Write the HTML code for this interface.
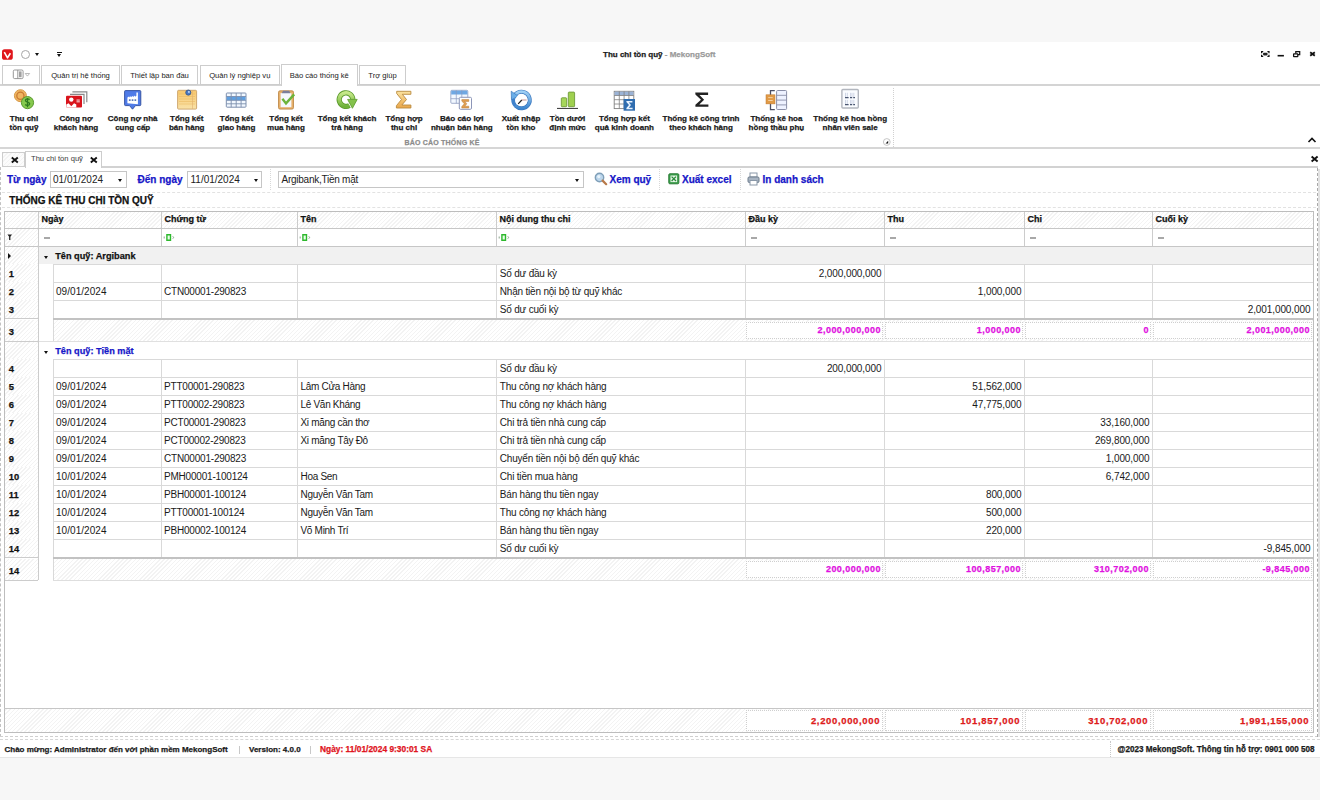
<!DOCTYPE html><html><head><meta charset="utf-8"><style>
*{box-sizing:border-box;margin:0;padding:0}
html,body{width:1320px;height:800px;overflow:hidden;background:#f7f7f7;font-family:"Liberation Sans",sans-serif;color:#1a1a1a}
.abs{position:absolute}
.t{position:absolute;white-space:nowrap;line-height:1}
.b{font-weight:bold;-webkit-text-stroke:0.25px currentColor}
.hatch{background-color:#fcfcfc;background-image:repeating-linear-gradient(-45deg,#f3f3f3 0 1px,transparent 1px 2.9px)}
</style></head><body>
<div class="abs" style="left:0;top:42px;width:1320px;height:716px;background:#fff"></div>
<svg class="abs" style="left:0;top:47px" width="16" height="15" viewBox="0 0 16 15"><rect x="2" y="2.3" width="10.8" height="10.5" rx="2.6" fill="#e0161c"/><path d="M4.3 5.2l3.2 5.6 2.9-4.6" fill="none" stroke="#fff" stroke-width="1.6" stroke-linejoin="round"/></svg>
<div class="abs" style="left:21px;top:50px;width:9px;height:9px;border:1px solid #a6a6a6;border-radius:50%"></div>
<div class="abs" style="left:35px;top:53px;width:0;height:0;border-left:2.5px solid transparent;border-right:2.5px solid transparent;border-top:3px solid #111"></div>
<div class="abs" style="left:57px;top:52px;width:5px;height:1px;background:#111"></div>
<div class="abs" style="left:57px;top:54px;width:0;height:0;border-left:2.5px solid transparent;border-right:2.5px solid transparent;border-top:3px solid #111"></div>
<div class="t b" style="left:603px;top:50.8px;font-size:8px;color:#1a1a1a">Thu chi tồn quỹ <span style="color:#9a9a9a">- MekongSoft</span></div>
<svg class="abs" style="left:1255px;top:44px" width="65" height="18" viewBox="0 0 65 18"><g fill="none" stroke="#111"><path d="M6.6 9.2v-1.6h1.6M12.4 7.6h1.6v1.6M6.6 10.8v1.6h1.6M14 10.8v1.6h-1.6" stroke-width="1.2"/><rect x="8" y="8.7" width="4.6" height="2.7" rx="1.1" fill="#222" stroke="none"/><path d="M22.6 11.7h6.3" stroke-width="1.6"/><path d="M40.8 9.4v-1.8h3.9v3h-1.7" stroke-width="1.25"/><rect x="38.6" y="9.9" width="4.2" height="2.6" rx="0.3" stroke-width="1.25"/><path d="M55.2 8.2l4.6 3.6M59.8 8.2l-4.6 3.6" stroke-width="1.8"/></g></svg>
<div class="abs" style="left:0;top:84px;width:1320px;height:2px;background:#d4d4d4"></div>
<div class="abs" style="left:2px;top:65px;width:38px;height:20px;border:1px solid #cdcdcd;background:#fff"></div>
<div class="abs" style="left:41px;top:65px;width:79px;height:20px;border:1px solid #cdcdcd;background:#fff"></div>
<div class="t" style="left:41px;width:79px;text-align:center;top:71.8px;font-size:7.6px;color:#222">Quản trị hệ thống</div>
<div class="abs" style="left:121px;top:65px;width:77px;height:20px;border:1px solid #cdcdcd;background:#fff"></div>
<div class="t" style="left:121px;width:77px;text-align:center;top:71.8px;font-size:7.6px;color:#222">Thiết lập ban đầu</div>
<div class="abs" style="left:199.5px;top:65px;width:80.5px;height:20px;border:1px solid #cdcdcd;background:#fff"></div>
<div class="t" style="left:199.5px;width:80.5px;text-align:center;top:71.8px;font-size:7.6px;color:#222">Quản lý nghiệp vụ</div>
<div class="abs" style="left:281px;top:64px;width:76.5px;height:22px;border:1px solid #cdcdcd;border-bottom:none;background:#fff"></div>
<div class="t" style="left:281px;width:76.5px;text-align:center;top:71.8px;font-size:7.6px;color:#222">Báo cáo thống kê</div>
<div class="abs" style="left:359px;top:65px;width:47px;height:20px;border:1px solid #cdcdcd;background:#fff"></div>
<div class="t" style="left:359px;width:47px;text-align:center;top:71.8px;font-size:7.6px;color:#222">Trợ giúp</div>
<svg class="abs" style="left:12px;top:69px" width="20" height="11" viewBox="0 0 20 11"><rect x="1.3" y="1" width="9.8" height="8.6" rx="1.3" fill="#fff" stroke="#8c8c8c" stroke-width="0.9"/><path d="M5.8 1v8.6" stroke="#8c8c8c" stroke-width="0.9"/><rect x="7" y="2.4" width="2.6" height="5.8" fill="#a0a0a0"/><path d="M13.2 4.5h4.4l-2.2 2.6z" fill="none" stroke="#a8a8a8" stroke-width="0.8"/></svg>
<div class="abs" style="left:0;top:146.5px;width:1320px;height:2px;background:#d6d6d6"></div>
<div class="t b" style="left:-36px;width:120px;text-align:center;top:114.5px;font-size:8px;color:#1a1a1a">Thu chi</div>
<div class="t b" style="left:-36px;width:120px;text-align:center;top:123.5px;font-size:8px;color:#1a1a1a">tồn quỹ</div>
<div class="t b" style="left:16px;width:120px;text-align:center;top:114.5px;font-size:8px;color:#1a1a1a">Công nợ</div>
<div class="t b" style="left:16px;width:120px;text-align:center;top:123.5px;font-size:8px;color:#1a1a1a">khách hàng</div>
<div class="t b" style="left:72.69999999999999px;width:120px;text-align:center;top:114.5px;font-size:8px;color:#1a1a1a">Công nợ nhà</div>
<div class="t b" style="left:72.69999999999999px;width:120px;text-align:center;top:123.5px;font-size:8px;color:#1a1a1a">cung cấp</div>
<div class="t b" style="left:126.69999999999999px;width:120px;text-align:center;top:114.5px;font-size:8px;color:#1a1a1a">Tổng kết</div>
<div class="t b" style="left:126.69999999999999px;width:120px;text-align:center;top:123.5px;font-size:8px;color:#1a1a1a">bán hàng</div>
<div class="t b" style="left:176.5px;width:120px;text-align:center;top:114.5px;font-size:8px;color:#1a1a1a">Tổng kết</div>
<div class="t b" style="left:176.5px;width:120px;text-align:center;top:123.5px;font-size:8px;color:#1a1a1a">giao hàng</div>
<div class="t b" style="left:226px;width:120px;text-align:center;top:114.5px;font-size:8px;color:#1a1a1a">Tổng kết</div>
<div class="t b" style="left:226px;width:120px;text-align:center;top:123.5px;font-size:8px;color:#1a1a1a">mua hàng</div>
<div class="t b" style="left:287px;width:120px;text-align:center;top:114.5px;font-size:8px;color:#1a1a1a">Tổng kết khách</div>
<div class="t b" style="left:287px;width:120px;text-align:center;top:123.5px;font-size:8px;color:#1a1a1a">trả hàng</div>
<div class="t b" style="left:344px;width:120px;text-align:center;top:114.5px;font-size:8px;color:#1a1a1a">Tổng hợp</div>
<div class="t b" style="left:344px;width:120px;text-align:center;top:123.5px;font-size:8px;color:#1a1a1a">thu chi</div>
<div class="t b" style="left:401.8px;width:120px;text-align:center;top:114.5px;font-size:8px;color:#1a1a1a">Báo cáo lợi</div>
<div class="t b" style="left:401.8px;width:120px;text-align:center;top:123.5px;font-size:8px;color:#1a1a1a">nhuận bán hàng</div>
<div class="t b" style="left:461px;width:120px;text-align:center;top:114.5px;font-size:8px;color:#1a1a1a">Xuất nhập</div>
<div class="t b" style="left:461px;width:120px;text-align:center;top:123.5px;font-size:8px;color:#1a1a1a">tồn kho</div>
<div class="t b" style="left:507.6px;width:120px;text-align:center;top:114.5px;font-size:8px;color:#1a1a1a">Tồn dưới</div>
<div class="t b" style="left:507.6px;width:120px;text-align:center;top:123.5px;font-size:8px;color:#1a1a1a">định mức</div>
<div class="t b" style="left:564.4px;width:120px;text-align:center;top:114.5px;font-size:8px;color:#1a1a1a">Tổng hợp kết</div>
<div class="t b" style="left:564.4px;width:120px;text-align:center;top:123.5px;font-size:8px;color:#1a1a1a">quả kinh doanh</div>
<div class="t b" style="left:641px;width:120px;text-align:center;top:114.5px;font-size:8px;color:#1a1a1a">Thống kê công trình</div>
<div class="t b" style="left:641px;width:120px;text-align:center;top:123.5px;font-size:8px;color:#1a1a1a">theo khách hàng</div>
<div class="t b" style="left:716.4px;width:120px;text-align:center;top:114.5px;font-size:8px;color:#1a1a1a">Thống kê hoa</div>
<div class="t b" style="left:716.4px;width:120px;text-align:center;top:123.5px;font-size:8px;color:#1a1a1a">hồng thầu phụ</div>
<div class="t b" style="left:790.2px;width:120px;text-align:center;top:114.5px;font-size:8px;color:#1a1a1a">Thống kê hoa hồng</div>
<div class="t b" style="left:790.2px;width:120px;text-align:center;top:123.5px;font-size:8px;color:#1a1a1a">nhân viên sale</div>
<div class="t b" style="left:404.5px;top:138.5px;font-size:7px;color:#8c8c8c;letter-spacing:0.2px">BÁO CÁO THỐNG KÊ</div>
<svg class="abs" style="left:882px;top:137px" width="10" height="10"><circle cx="4.8" cy="5" r="3.4" fill="#fff" stroke="#b8b8b8" stroke-width="0.8"/><path d="M6.2 3.8v2.6h-2.6z" fill="#111"/></svg>
<div class="abs" style="left:893px;top:88px;width:0;height:59px;border-left:1px dotted #d0d0d0"></div>
<svg class="abs" style="left:1306px;top:136px" width="12" height="8"><path d="M2.5 6l3.5-3.5 3.5 3.5" fill="none" stroke="#111" stroke-width="1.6"/></svg>
<svg class="abs" style="left:0;top:0" width="900" height="115" viewBox="0 0 900 115"><defs><linearGradient id="gGreen" x1="0" y1="0" x2="0" y2="1"><stop offset="0" stop-color="#c7e98a"/><stop offset="1" stop-color="#6fb23a"/></linearGradient><linearGradient id="gOrange" x1="0" y1="0" x2="0" y2="1"><stop offset="0" stop-color="#fbe3a0"/><stop offset="1" stop-color="#e9a64a"/></linearGradient><linearGradient id="gBlue" x1="0" y1="0" x2="0" y2="1"><stop offset="0" stop-color="#9fd0f5"/><stop offset="1" stop-color="#3d86cf"/></linearGradient><linearGradient id="gPad" x1="0" y1="0" x2="0" y2="1"><stop offset="0" stop-color="#f7c76c"/><stop offset="1" stop-color="#f9e2a8"/></linearGradient></defs><circle cx="20.4" cy="95.7" r="6" fill="#f0b560" stroke="#d69a4a" stroke-width="1"/><circle cx="20.4" cy="95.7" r="3.6" fill="none" stroke="#c97a32" stroke-width="1.3"/><circle cx="27.5" cy="102.6" r="6.1" fill="#86c94e" stroke="#5a9a2e" stroke-width="1"/><path d="M29.6 99.6c-1-1-4.2-1-4.2 0.9c0 2 4.3 1.2 4.3 3.2c0 2-3.4 2-4.5 0.8M27.5 98v9.2" fill="none" stroke="#2f7a1e" stroke-width="1.3"/><path d="M72.4 91.9h14.4v10.3" fill="none" stroke="#8a8a8a" stroke-width="1.2"/><path d="M70 94.3h14v9.8" fill="none" stroke="#8a8a8a" stroke-width="1.2"/><rect x="66" y="95.8" width="16" height="11.8" rx="1" fill="#d9141c"/><circle cx="71.3" cy="99.6" r="2.2" fill="#fff"/><path d="M66.3 107.6v-3.2l2.2-1.2 2.8 3 2.8-3 2.2 1.2v3.2z" fill="#fff"/><rect x="76.5" y="99.6" width="3.3" height="0.9" fill="#fff"/><rect x="76.5" y="101.4" width="3.3" height="0.9" fill="#fff"/><path d="M125.5 90.6h14.4a0.9 0.9 0 0 1 .9 .9v13.2a0.9 0.9 0 0 1 -.9 .9h-4.4l-3 3.6-3-3.6h-4a0.9 0.9 0 0 1 -.9 -.9v-13.2a0.9 0.9 0 0 1 .9 -.9z" fill="#4f7be8" stroke="#2e4c9a" stroke-width="0.9"/><path d="M127.4 103.2v-5.6l1.9-1.4v1.2l1.9-1.4v1.2l1.9-1.4v1.2l1.9-1.4v1.2l1.4-1v-3.4h1.5v11.8z" fill="#fff"/><path d="M128.9 99.3h1.7v1.7h-1.7zM131.7 99.3h1.7v1.7h-1.7zM134.5 99.3h1.7v1.7h-1.7z" fill="#5a78b8"/><rect x="177.6" y="90.3" width="19" height="18.8" rx="1" fill="url(#gPad)" stroke="#c9a067" stroke-width="0.9"/><path d="M179 94h16M179 96.5h16M179 99h16M179 101.5h16M179 104h16" stroke="#e9b55a" stroke-width="0.5"/><path d="M192.5 91v18" stroke="#e0b070" stroke-width="0.6"/><circle cx="188.3" cy="92.6" r="2.6" fill="#4a78c0" stroke="#2d4f86" stroke-width="0.7"/><circle cx="188.9" cy="91.9" r="0.9" fill="#cfe3ff"/><rect x="226.3" y="93" width="19.7" height="14.2" rx="0.8" fill="#f2f8ff" stroke="#7d8fae" stroke-width="1"/><rect x="226.8" y="96.5" width="18.7" height="3.8" fill="#5f9fe0"/><path d="M231.2 93v14.2M236.2 93v14.2M241.1 93v14.2M226.3 96.5h19.7M226.3 100.3h19.7M226.3 103.8h19.7" stroke="#7d8fae" stroke-width="0.9"/><rect x="278.5" y="90.8" width="15" height="18.3" rx="1.5" fill="#e6b06a" stroke="#b9823e" stroke-width="0.8"/><rect x="280.6" y="93" width="10.8" height="14.2" fill="#f5f8fc"/><path d="M281.6 93.3l1.5-2.6h6l1.5 2.6z" fill="#7b7f9a"/><path d="M282.4 98.8l3.6 4.6 8.2-9" fill="none" stroke="#6cb43a" stroke-width="2.4"/><path d="M349.4 105.5A6.8 6.8 0 1 1 352.8 99.6" fill="none" stroke="#5a9a2a" stroke-width="5.2"/><path d="M349.4 105.5A6.8 6.8 0 1 1 352.8 99.6" fill="none" stroke="url(#gGreen)" stroke-width="3.6"/><path d="M347.6 99.4h9.6l-4.8 8.9z" fill="#84c24c" stroke="#5a9a2a" stroke-width="0.8" stroke-linejoin="round"/><path d="M396.7 91.3h14.2v3h-8.6l4.2 5.2-4.6 5.5h9v3h-14.5v-2.3l5.1-6.2-4.8-6z" fill="url(#gOrange)" stroke="#b98a3e" stroke-width="0.9"/><rect x="450.8" y="90.3" width="17" height="13" rx="1" fill="#f2f8ff" stroke="#8a9abf" stroke-width="0.8"/><rect x="451.2" y="90.7" width="16.2" height="3.8" fill="#6fa8e3"/><path d="M456.3 90.3v13M461.8 90.3v13M450.8 98.7h17" stroke="#8a9abf" stroke-width="0.7"/><rect x="459.3" y="97.3" width="12.2" height="12" rx="1.2" fill="#fff" stroke="#8d96b8" stroke-width="1"/><path d="M461.8 99.6h7v1.8h-4l2 2.4-2 2.4h4v1.8h-7v-1.4l2.5-2.8-2.5-2.8z" fill="#e2a052" stroke="#b47a3a" stroke-width="0.5"/><path d="M513.3 98.5A8.3 8.3 0 1 1 515.6 105.9" fill="none" stroke="#3b78bf" stroke-width="4.0"/><path d="M513.3 98.5A8.3 8.3 0 1 1 515.6 105.9" fill="none" stroke="url(#gBlue)" stroke-width="2.6"/><path d="M515.6 105.9A8.3 8.3 0 0 1 513.3 98.5" fill="none" stroke="#3f82cc" stroke-width="3.6"/><path d="M511.2 91.2l0.3 8.6 6.8-3.6z" fill="#6aaee8" stroke="#3b78bf" stroke-width="0.7" stroke-linejoin="round"/><circle cx="521.5" cy="100.2" r="5.9" fill="#fff"/><path d="M521.8 100l-3.6 3.8" stroke="#222" stroke-width="1.2"/><path d="M521.8 100h4.8" stroke="#a04848" stroke-width="0.6"/><rect x="561.3" y="97.8" width="5.4" height="8.9" rx="0.8" fill="#a6d65a" stroke="#6f9a3a" stroke-width="0.9"/><rect x="568.3" y="92.1" width="6.3" height="14.6" rx="0.8" fill="#9fd04f" stroke="#6f9a3a" stroke-width="0.9"/><rect x="557" y="107.9" width="21" height="1.1" fill="#444"/><rect x="614.2" y="91.3" width="19.6" height="17.3" fill="#fff" stroke="#808080" stroke-width="0.9"/><rect x="614.6" y="91.7" width="18.8" height="3.8" fill="#9bb3d6"/><path d="M619.3 91.3v17.3M624.1 91.3v17.3M628.9 91.3v17.3M614.2 95.5h19.6M614.2 99.7h19.6M614.2 104h19.6" stroke="#808080" stroke-width="0.8"/><rect x="623.6" y="99" width="11.4" height="11.7" fill="#2f6db0"/><path d="M626.4 100.9h6v1.5h-3.6l2.2 2.7-2.2 2.7h3.8v1.5h-6.2v-1.2l2.6-3-2.6-3z" fill="#e8f3ff"/><path d="M695.3 92.6h12.8v2.4h-8.6l4.6 4.7-4.8 4.8h9.1v2.2h-13v-1.9l5.6-5.1-5.6-5.2z" fill="#222"/><path d="M774.8 90.6h-4.3v19h4.3" fill="none" stroke="#4c4f64" stroke-width="1.3"/><rect x="766" y="94.8" width="9" height="9.1" fill="#e09a46" stroke="#c07a30" stroke-width="0.5"/><path d="M768.2 97.6h4.5M768.2 100.5h4.5" stroke="#fbe0b8" stroke-width="0.8"/><rect x="776.6" y="90.5" width="10" height="19" rx="1" fill="#eef2ff" stroke="#8a8fa8" stroke-width="1"/><path d="M776.6 95.3h10M776.6 100.1h10M776.6 104.9h10" stroke="#8a8fa8" stroke-width="0.9"/><rect x="841.9" y="89.5" width="16.4" height="18.5" rx="1" fill="#fafcff" stroke="#b2b6be" stroke-width="1.4"/><path d="M845.5 92.8v4.4M847.3 92.8v4.4M850.6 92.8v4.4M852 92.8v4.4M853.8 92.8v4.4M845.5 99.8v4.4M847.3 99.8v4.4M850.6 99.8v4.4M852 99.8v4.4M853.8 99.8v4.4" stroke="#c5cde0" stroke-width="0.8"/><path d="M845 97.6h3.6M850 97.6h2.2M853.2 97.6h1.8M845 104.6h3.6M850 104.6h2.2M853.2 104.6h1.8" stroke="#4a5670" stroke-width="1.1"/></svg>
<div class="abs hatch" style="left:2px;top:152px;width:22.5px;height:15px;border:1px solid #cdcdcd"></div>
<svg class="abs" style="left:9.5px;top:155.5px" width="10" height="8"><path d="M1.8 1.6l6 4.8M7.8 1.6l-6 4.8" stroke="#111" stroke-width="1.9"/></svg>
<div class="abs" style="left:24.5px;top:151px;width:77.5px;height:17px;border:1px solid #cdcdcd;border-bottom:none;background:#fff"></div>
<div class="t" style="left:31px;top:154.5px;font-size:7.6px;color:#3a3a3a">Thu chi tồn quỹ</div>
<svg class="abs" style="left:89px;top:155.5px" width="10" height="8"><path d="M1.8 1.6l6 4.8M7.8 1.6l-6 4.8" stroke="#111" stroke-width="1.9"/></svg>
<svg class="abs" style="left:1309.5px;top:154.5px" width="10" height="9"><path d="M1.6 1.6l6 5M7.6 1.6l-6 5" stroke="#111" stroke-width="1.9"/></svg>
<div class="abs" style="left:102px;top:166px;width:1216px;height:2px;background:#d2d2d2"></div>
<div class="abs" style="left:0;top:167px;width:0;height:570px;border-left:1px dashed #c2c2c2"></div>
<div class="abs" style="left:1318px;top:169px;width:2px;height:568px;background:#e2e2e2"></div>
<div class="t b" style="left:7px;top:174.5px;font-size:10px;color:#1717c8">Từ ngày</div>
<div class="abs" style="left:49.5px;top:171px;width:77.0px;height:17px;border:1px solid #c6c6c6;background:#fff;"></div>
<div class="t" style="left:53px;top:175px;font-size:10px;color:#222">01/01/2024</div>
<div class="abs" style="left:118px;top:178.5px;width:0;height:0;border-left:2.5px solid transparent;border-right:2.5px solid transparent;border-top:3px solid #111"></div>
<div class="t b" style="left:137.5px;top:174.5px;font-size:10px;color:#1717c8">Đến ngày</div>
<div class="abs" style="left:186.5px;top:171px;width:75.0px;height:17px;border:1px solid #c6c6c6;background:#fff;"></div>
<div class="t" style="left:190.5px;top:175px;font-size:10px;color:#222">11/01/2024</div>
<div class="abs" style="left:253.5px;top:178.5px;width:0;height:0;border-left:2.5px solid transparent;border-right:2.5px solid transparent;border-top:3px solid #111"></div>
<div class="abs" style="left:269.5px;top:169px;width:0;height:21px;border-left:1px dotted #d8d8d8"></div>
<div class="abs" style="left:278px;top:171px;width:305.5px;height:17px;border:1px solid #c6c6c6;background:#fff;"></div>
<div class="t" style="left:281.5px;top:175px;font-size:10px;color:#222;letter-spacing:-0.25px">Argibank,Tiền mặt</div>
<div class="abs" style="left:575px;top:178.5px;width:0;height:0;border-left:2.5px solid transparent;border-right:2.5px solid transparent;border-top:3px solid #111"></div>
<svg class="abs" style="left:594px;top:172px" width="14" height="14" viewBox="0 0 14 14"><circle cx="5.5" cy="5.5" r="4.2" fill="#bcd6ec" stroke="#7f9fb8" stroke-width="1.4"/><circle cx="4.8" cy="4.6" r="1.6" fill="#e8f3fb"/><path d="M8.6 8.6l3.6 3.6" stroke="#b87a4a" stroke-width="2.2" stroke-linecap="round"/></svg>
<div class="t b" style="left:609.5px;top:174.5px;font-size:10px;color:#1717c8">Xem quỹ</div>
<div class="abs" style="left:659px;top:169px;width:0;height:21px;border-left:1px dotted #d8d8d8"></div>
<svg class="abs" style="left:668px;top:173px" width="12" height="12" viewBox="0 0 12 12"><rect x="0.8" y="0.8" width="10" height="10" rx="1" fill="#3aa04a" stroke="#2a7a36"/><rect x="2.5" y="2.5" width="6.6" height="6.6" fill="#e8f5e8"/><path d="M3.6 3.6l4.4 4.4M8 3.6l-4.4 4.4" stroke="#2a8a3a" stroke-width="1.3"/></svg>
<div class="t b" style="left:682px;top:174.5px;font-size:10px;color:#1717c8">Xuất excel</div>
<div class="abs" style="left:739.5px;top:169px;width:0;height:21px;border-left:1px dotted #d8d8d8"></div>
<svg class="abs" style="left:747px;top:172px" width="13" height="14" viewBox="0 0 13 14"><rect x="3" y="1" width="7" height="4" fill="#fff" stroke="#8a98a8"/><rect x="1" y="5" width="11" height="5.5" rx="1.2" fill="#a8b4c2" stroke="#6d7c8c"/><rect x="3" y="8.5" width="7" height="4.5" fill="#fff" stroke="#8a98a8"/></svg>
<div class="t b" style="left:762.5px;top:174.5px;font-size:10px;color:#1717c8">In danh sách</div>
<div class="abs" style="left:2px;top:192px;width:1314px;height:0;border-top:1px dashed #e2e2e2"></div>
<div class="t b" style="left:9.3px;top:195.5px;font-size:10px;color:#111">THỐNG KÊ THU CHI TỒN QUỸ</div>
<div class="abs" style="left:2px;top:207px;width:1314px;height:0;border-top:1px dashed #e2e2e2"></div>
<div class="abs" style="left:4px;top:211px;width:1310px;height:18px;background:#fff"></div>
<div class="abs" style="left:5px;top:212px;width:1308px;height:16px;background-color:#fff;background-image:repeating-linear-gradient(-45deg,#f3f3f3 0 1px,transparent 1px 2.9px)"></div>
<div class="t b" style="left:41.5px;top:215.08px;font-size:9px;color:#111;">Ngày</div>
<div class="t b" style="left:164.5px;top:215.08px;font-size:9px;color:#111;">Chứng từ</div>
<div class="t b" style="left:300.5px;top:215.08px;font-size:9px;color:#111;">Tên</div>
<div class="t b" style="left:499.5px;top:215.08px;font-size:9px;color:#111;">Nội dung thu chi</div>
<div class="t b" style="left:748.5px;top:215.08px;font-size:9px;color:#111;">Đầu kỳ</div>
<div class="t b" style="left:887.5px;top:215.08px;font-size:9px;color:#111;">Thu</div>
<div class="t b" style="left:1027.5px;top:215.08px;font-size:9px;color:#111;">Chi</div>
<div class="t b" style="left:1155.5px;top:215.08px;font-size:9px;color:#111;">Cuối kỳ</div>
<div class="abs" style="left:39px;top:229px;width:1274px;height:17px;background:#fff"></div>
<div class="abs" style="left:5px;top:229px;width:33px;height:17px;background-color:#fff;background-image:repeating-linear-gradient(-45deg,#f3f3f3 0 1px,transparent 1px 2.9px)"></div>
<div class="abs" style="left:4px;top:211px;width:1px;height:35px;background:#bdbdbd"></div>
<div class="abs" style="left:38px;top:211px;width:1px;height:35px;background:#cccccc"></div>
<div class="abs" style="left:161px;top:211px;width:1px;height:35px;background:#cccccc"></div>
<div class="abs" style="left:297px;top:211px;width:1px;height:35px;background:#cccccc"></div>
<div class="abs" style="left:496px;top:211px;width:1px;height:35px;background:#cccccc"></div>
<div class="abs" style="left:745px;top:211px;width:1px;height:35px;background:#cccccc"></div>
<div class="abs" style="left:884px;top:211px;width:1px;height:35px;background:#cccccc"></div>
<div class="abs" style="left:1024px;top:211px;width:1px;height:35px;background:#cccccc"></div>
<div class="abs" style="left:1152px;top:211px;width:1px;height:35px;background:#cccccc"></div>
<div class="abs" style="left:1313px;top:211px;width:1px;height:35px;background:#bdbdbd"></div>
<div class="abs" style="left:4px;top:211px;width:1310px;height:1px;background:#bdbdbd"></div>
<div class="abs" style="left:4px;top:228px;width:1310px;height:1px;background:#c6c6c6"></div>
<div class="abs" style="left:4px;top:246px;width:1310px;height:1px;background:#c6c6c6"></div>
<div class="abs" style="left:44px;top:236.5px;width:6px;height:2px;background:#a8a8a8"></div>
<svg class="abs" style="left:163px;top:232.5px" width="12" height="9" viewBox="0 0 12 9"><rect x="3.2" y="1" width="5" height="7" fill="#2db82d"/><rect x="4.6" y="2.5" width="2.2" height="4" fill="#e9ffe9"/><path d="M1.2 3.5v2M9.8 3.3l0.8 1.2-0.8 1.2" stroke="#6a8a6a" stroke-width="0.8" fill="none"/></svg>
<svg class="abs" style="left:299px;top:232.5px" width="12" height="9" viewBox="0 0 12 9"><rect x="3.2" y="1" width="5" height="7" fill="#2db82d"/><rect x="4.6" y="2.5" width="2.2" height="4" fill="#e9ffe9"/><path d="M1.2 3.5v2M9.8 3.3l0.8 1.2-0.8 1.2" stroke="#6a8a6a" stroke-width="0.8" fill="none"/></svg>
<svg class="abs" style="left:498px;top:232.5px" width="12" height="9" viewBox="0 0 12 9"><rect x="3.2" y="1" width="5" height="7" fill="#2db82d"/><rect x="4.6" y="2.5" width="2.2" height="4" fill="#e9ffe9"/><path d="M1.2 3.5v2M9.8 3.3l0.8 1.2-0.8 1.2" stroke="#6a8a6a" stroke-width="0.8" fill="none"/></svg>
<div class="abs" style="left:751px;top:236.5px;width:6px;height:2px;background:#a8a8a8"></div>
<div class="abs" style="left:890px;top:236.5px;width:6px;height:2px;background:#a8a8a8"></div>
<div class="abs" style="left:1030px;top:236.5px;width:6px;height:2px;background:#a8a8a8"></div>
<div class="abs" style="left:1158px;top:236.5px;width:6px;height:2px;background:#a8a8a8"></div>
<svg class="abs" style="left:7px;top:233px" width="6" height="8" viewBox="0 0 6 8"><path d="M0.5 1.5h4.5l-1.6 2.2v3.3h-1.3v-3.3z" fill="#222"/></svg>
<div class="abs" style="left:39px;top:247px;width:1274px;height:17px;background:#f1f1f1"></div>
<div class="abs" style="left:5px;top:247px;width:33px;height:17px;background-color:#fff;background-image:repeating-linear-gradient(-45deg,#f3f3f3 0 1px,transparent 1px 2.9px)"></div>
<div class="abs" style="left:4px;top:264px;width:34px;height:1px;background:#cccccc"></div>
<div class="abs" style="left:8px;top:252.5px;width:0;height:0;border-top:3px solid transparent;border-bottom:3px solid transparent;border-left:3px solid #111"></div>
<div class="abs" style="left:44px;top:255.5px;width:0;height:0;border-left:2.5px solid transparent;border-right:2.5px solid transparent;border-top:3px solid #111"></div>
<div class="t b" style="left:55.2px;top:252.21px;font-size:9.2px;color:#111;">Tên quỹ: Argibank</div>
<div class="abs" style="left:53px;top:264px;width:1260px;height:1px;background:#d9d9d9"></div>
<div class="abs" style="left:5px;top:264px;width:33px;height:18px;background-color:#fff;background-image:repeating-linear-gradient(-45deg,#f3f3f3 0 1px,transparent 1px 2.9px)"></div>
<div class="abs" style="left:4px;top:282px;width:34px;height:1px;background:#cccccc"></div>
<div class="t b" style="left:8.8px;top:269.34px;font-size:9.4px;color:#111;">1</div>
<div class="abs" style="left:53px;top:282px;width:1260px;height:1px;background:#d9d9d9"></div>
<div class="abs" style="left:53px;top:264px;width:1px;height:18px;background:#d9d9d9"></div>
<div class="abs" style="left:161px;top:264px;width:1px;height:18px;background:#d9d9d9"></div>
<div class="abs" style="left:297px;top:264px;width:1px;height:18px;background:#d9d9d9"></div>
<div class="abs" style="left:496px;top:264px;width:1px;height:18px;background:#d9d9d9"></div>
<div class="abs" style="left:745px;top:264px;width:1px;height:18px;background:#d9d9d9"></div>
<div class="abs" style="left:884px;top:264px;width:1px;height:18px;background:#d9d9d9"></div>
<div class="abs" style="left:1024px;top:264px;width:1px;height:18px;background:#d9d9d9"></div>
<div class="abs" style="left:1152px;top:264px;width:1px;height:18px;background:#d9d9d9"></div>
<div class="t" style="left:499.8px;top:269.2px;font-size:10px;letter-spacing:-0.2px">Số dư đầu kỳ</div>
<div class="t" style="left:581.4px;width:300px;text-align:right;top:269.2px;font-size:10px;letter-spacing:-0.1px">2,000,000,000</div>
<div class="abs" style="left:5px;top:282px;width:33px;height:18px;background-color:#fff;background-image:repeating-linear-gradient(-45deg,#f3f3f3 0 1px,transparent 1px 2.9px)"></div>
<div class="abs" style="left:4px;top:300px;width:34px;height:1px;background:#cccccc"></div>
<div class="t b" style="left:8.8px;top:287.34px;font-size:9.4px;color:#111;">2</div>
<div class="abs" style="left:53px;top:300px;width:1260px;height:1px;background:#d9d9d9"></div>
<div class="abs" style="left:53px;top:282px;width:1px;height:18px;background:#d9d9d9"></div>
<div class="abs" style="left:161px;top:282px;width:1px;height:18px;background:#d9d9d9"></div>
<div class="abs" style="left:297px;top:282px;width:1px;height:18px;background:#d9d9d9"></div>
<div class="abs" style="left:496px;top:282px;width:1px;height:18px;background:#d9d9d9"></div>
<div class="abs" style="left:745px;top:282px;width:1px;height:18px;background:#d9d9d9"></div>
<div class="abs" style="left:884px;top:282px;width:1px;height:18px;background:#d9d9d9"></div>
<div class="abs" style="left:1024px;top:282px;width:1px;height:18px;background:#d9d9d9"></div>
<div class="abs" style="left:1152px;top:282px;width:1px;height:18px;background:#d9d9d9"></div>
<div class="t" style="left:56px;top:287.2px;font-size:10px;letter-spacing:0.05px">09/01/2024</div>
<div class="t" style="left:164px;top:287.2px;font-size:10px;letter-spacing:-0.2px">CTN00001-290823</div>
<div class="t" style="left:499.8px;top:287.2px;font-size:10px;letter-spacing:-0.2px">Nhận tiền nội bộ từ quỹ khác</div>
<div class="t" style="left:721.4px;width:300px;text-align:right;top:287.2px;font-size:10px;letter-spacing:-0.1px">1,000,000</div>
<div class="abs" style="left:5px;top:300px;width:33px;height:18px;background-color:#fff;background-image:repeating-linear-gradient(-45deg,#f3f3f3 0 1px,transparent 1px 2.9px)"></div>
<div class="abs" style="left:4px;top:318px;width:34px;height:1px;background:#cccccc"></div>
<div class="t b" style="left:8.8px;top:305.34px;font-size:9.4px;color:#111;">3</div>
<div class="abs" style="left:53px;top:318px;width:1260px;height:1px;background:#d9d9d9"></div>
<div class="abs" style="left:53px;top:300px;width:1px;height:18px;background:#d9d9d9"></div>
<div class="abs" style="left:161px;top:300px;width:1px;height:18px;background:#d9d9d9"></div>
<div class="abs" style="left:297px;top:300px;width:1px;height:18px;background:#d9d9d9"></div>
<div class="abs" style="left:496px;top:300px;width:1px;height:18px;background:#d9d9d9"></div>
<div class="abs" style="left:745px;top:300px;width:1px;height:18px;background:#d9d9d9"></div>
<div class="abs" style="left:884px;top:300px;width:1px;height:18px;background:#d9d9d9"></div>
<div class="abs" style="left:1024px;top:300px;width:1px;height:18px;background:#d9d9d9"></div>
<div class="abs" style="left:1152px;top:300px;width:1px;height:18px;background:#d9d9d9"></div>
<div class="t" style="left:499.8px;top:305.2px;font-size:10px;letter-spacing:-0.2px">Số dư cuối kỳ</div>
<div class="t" style="left:1010.4px;width:300px;text-align:right;top:305.2px;font-size:10px;letter-spacing:-0.1px">2,001,000,000</div>
<div class="abs" style="left:53px;top:318px;width:1260px;height:2px;background:#c2c2c2"></div>
<div class="abs" style="left:5px;top:320px;width:33px;height:21px;background-color:#fff;background-image:repeating-linear-gradient(-45deg,#f3f3f3 0 1px,transparent 1px 2.9px)"></div>
<div class="abs" style="left:4px;top:341px;width:34px;height:1px;background:#cccccc"></div>
<div class="t b" style="left:8.8px;top:326.74px;font-size:9.4px;color:#111;">3</div>
<div class="abs" style="left:53px;top:320px;width:1260px;height:21px;background-color:#fff;background-image:repeating-linear-gradient(-45deg,#f3f3f3 0 1px,transparent 1px 2.9px)"></div>
<div class="abs" style="left:53px;top:320px;width:1px;height:21px;background:#d9d9d9"></div>
<div class="abs" style="left:53px;top:341px;width:1260px;height:1px;background:#dedede"></div>
<div class="abs" style="left:746px;top:322px;width:137px;height:17px;background:#fff;border:1px dotted #cfcfcf"></div>
<div class="t b" style="left:580.95px;width:300px;text-align:right;top:326.28px;font-size:9px;color:#e010e0;letter-spacing:0.45px">2,000,000,000</div>
<div class="abs" style="left:885px;top:322px;width:138px;height:17px;background:#fff;border:1px dotted #cfcfcf"></div>
<div class="t b" style="left:720.95px;width:300px;text-align:right;top:326.28px;font-size:9px;color:#e010e0;letter-spacing:0.45px">1,000,000</div>
<div class="abs" style="left:1025px;top:322px;width:126px;height:17px;background:#fff;border:1px dotted #cfcfcf"></div>
<div class="t b" style="left:848.95px;width:300px;text-align:right;top:326.28px;font-size:9px;color:#e010e0;letter-spacing:0.45px">0</div>
<div class="abs" style="left:1153px;top:322px;width:159px;height:17px;background:#fff;border:1px dotted #cfcfcf"></div>
<div class="t b" style="left:1009.95px;width:300px;text-align:right;top:326.28px;font-size:9px;color:#e010e0;letter-spacing:0.45px">2,001,000,000</div>
<div class="abs" style="left:39px;top:342px;width:1274px;height:17px;background:#fff"></div>
<div class="abs" style="left:5px;top:342px;width:33px;height:17px;background-color:#fff;background-image:repeating-linear-gradient(-45deg,#f3f3f3 0 1px,transparent 1px 2.9px)"></div>
<div class="abs" style="left:4px;top:359px;width:34px;height:1px;background:#cccccc"></div>
<div class="abs" style="left:44px;top:350.5px;width:0;height:0;border-left:2.5px solid transparent;border-right:2.5px solid transparent;border-top:3px solid #111"></div>
<div class="t b" style="left:55.2px;top:347.21px;font-size:9.2px;color:#1717c8;">Tên quỹ: Tiền mặt</div>
<div class="abs" style="left:39px;top:341px;width:1274px;height:1px;background:#e0e0e0"></div>
<div class="abs" style="left:53px;top:359px;width:1260px;height:1px;background:#d9d9d9"></div>
<div class="abs" style="left:5px;top:359px;width:33px;height:18px;background-color:#fff;background-image:repeating-linear-gradient(-45deg,#f3f3f3 0 1px,transparent 1px 2.9px)"></div>
<div class="abs" style="left:4px;top:377px;width:34px;height:1px;background:#cccccc"></div>
<div class="t b" style="left:8.8px;top:364.34px;font-size:9.4px;color:#111;">4</div>
<div class="abs" style="left:53px;top:377px;width:1260px;height:1px;background:#d9d9d9"></div>
<div class="abs" style="left:53px;top:359px;width:1px;height:18px;background:#d9d9d9"></div>
<div class="abs" style="left:161px;top:359px;width:1px;height:18px;background:#d9d9d9"></div>
<div class="abs" style="left:297px;top:359px;width:1px;height:18px;background:#d9d9d9"></div>
<div class="abs" style="left:496px;top:359px;width:1px;height:18px;background:#d9d9d9"></div>
<div class="abs" style="left:745px;top:359px;width:1px;height:18px;background:#d9d9d9"></div>
<div class="abs" style="left:884px;top:359px;width:1px;height:18px;background:#d9d9d9"></div>
<div class="abs" style="left:1024px;top:359px;width:1px;height:18px;background:#d9d9d9"></div>
<div class="abs" style="left:1152px;top:359px;width:1px;height:18px;background:#d9d9d9"></div>
<div class="t" style="left:499.8px;top:364.2px;font-size:10px;letter-spacing:-0.2px">Số dư đầu kỳ</div>
<div class="t" style="left:581.4px;width:300px;text-align:right;top:364.2px;font-size:10px;letter-spacing:-0.1px">200,000,000</div>
<div class="abs" style="left:5px;top:377px;width:33px;height:18px;background-color:#fff;background-image:repeating-linear-gradient(-45deg,#f3f3f3 0 1px,transparent 1px 2.9px)"></div>
<div class="abs" style="left:4px;top:395px;width:34px;height:1px;background:#cccccc"></div>
<div class="t b" style="left:8.8px;top:382.34px;font-size:9.4px;color:#111;">5</div>
<div class="abs" style="left:53px;top:395px;width:1260px;height:1px;background:#d9d9d9"></div>
<div class="abs" style="left:53px;top:377px;width:1px;height:18px;background:#d9d9d9"></div>
<div class="abs" style="left:161px;top:377px;width:1px;height:18px;background:#d9d9d9"></div>
<div class="abs" style="left:297px;top:377px;width:1px;height:18px;background:#d9d9d9"></div>
<div class="abs" style="left:496px;top:377px;width:1px;height:18px;background:#d9d9d9"></div>
<div class="abs" style="left:745px;top:377px;width:1px;height:18px;background:#d9d9d9"></div>
<div class="abs" style="left:884px;top:377px;width:1px;height:18px;background:#d9d9d9"></div>
<div class="abs" style="left:1024px;top:377px;width:1px;height:18px;background:#d9d9d9"></div>
<div class="abs" style="left:1152px;top:377px;width:1px;height:18px;background:#d9d9d9"></div>
<div class="t" style="left:56px;top:382.2px;font-size:10px;letter-spacing:0.05px">09/01/2024</div>
<div class="t" style="left:164px;top:382.2px;font-size:10px;letter-spacing:-0.2px">PTT00001-290823</div>
<div class="t" style="left:300.5px;top:382.2px;font-size:10px;letter-spacing:-0.3px">Lâm Cửa Hàng</div>
<div class="t" style="left:499.8px;top:382.2px;font-size:10px;letter-spacing:-0.2px">Thu công nợ khách hàng</div>
<div class="t" style="left:721.4px;width:300px;text-align:right;top:382.2px;font-size:10px;letter-spacing:-0.1px">51,562,000</div>
<div class="abs" style="left:5px;top:395px;width:33px;height:18px;background-color:#fff;background-image:repeating-linear-gradient(-45deg,#f3f3f3 0 1px,transparent 1px 2.9px)"></div>
<div class="abs" style="left:4px;top:413px;width:34px;height:1px;background:#cccccc"></div>
<div class="t b" style="left:8.8px;top:400.34px;font-size:9.4px;color:#111;">6</div>
<div class="abs" style="left:53px;top:413px;width:1260px;height:1px;background:#d9d9d9"></div>
<div class="abs" style="left:53px;top:395px;width:1px;height:18px;background:#d9d9d9"></div>
<div class="abs" style="left:161px;top:395px;width:1px;height:18px;background:#d9d9d9"></div>
<div class="abs" style="left:297px;top:395px;width:1px;height:18px;background:#d9d9d9"></div>
<div class="abs" style="left:496px;top:395px;width:1px;height:18px;background:#d9d9d9"></div>
<div class="abs" style="left:745px;top:395px;width:1px;height:18px;background:#d9d9d9"></div>
<div class="abs" style="left:884px;top:395px;width:1px;height:18px;background:#d9d9d9"></div>
<div class="abs" style="left:1024px;top:395px;width:1px;height:18px;background:#d9d9d9"></div>
<div class="abs" style="left:1152px;top:395px;width:1px;height:18px;background:#d9d9d9"></div>
<div class="t" style="left:56px;top:400.2px;font-size:10px;letter-spacing:0.05px">09/01/2024</div>
<div class="t" style="left:164px;top:400.2px;font-size:10px;letter-spacing:-0.2px">PTT00002-290823</div>
<div class="t" style="left:300.5px;top:400.2px;font-size:10px;letter-spacing:-0.3px">Lê Văn Kháng</div>
<div class="t" style="left:499.8px;top:400.2px;font-size:10px;letter-spacing:-0.2px">Thu công nợ khách hàng</div>
<div class="t" style="left:721.4px;width:300px;text-align:right;top:400.2px;font-size:10px;letter-spacing:-0.1px">47,775,000</div>
<div class="abs" style="left:5px;top:413px;width:33px;height:18px;background-color:#fff;background-image:repeating-linear-gradient(-45deg,#f3f3f3 0 1px,transparent 1px 2.9px)"></div>
<div class="abs" style="left:4px;top:431px;width:34px;height:1px;background:#cccccc"></div>
<div class="t b" style="left:8.8px;top:418.34px;font-size:9.4px;color:#111;">7</div>
<div class="abs" style="left:53px;top:431px;width:1260px;height:1px;background:#d9d9d9"></div>
<div class="abs" style="left:53px;top:413px;width:1px;height:18px;background:#d9d9d9"></div>
<div class="abs" style="left:161px;top:413px;width:1px;height:18px;background:#d9d9d9"></div>
<div class="abs" style="left:297px;top:413px;width:1px;height:18px;background:#d9d9d9"></div>
<div class="abs" style="left:496px;top:413px;width:1px;height:18px;background:#d9d9d9"></div>
<div class="abs" style="left:745px;top:413px;width:1px;height:18px;background:#d9d9d9"></div>
<div class="abs" style="left:884px;top:413px;width:1px;height:18px;background:#d9d9d9"></div>
<div class="abs" style="left:1024px;top:413px;width:1px;height:18px;background:#d9d9d9"></div>
<div class="abs" style="left:1152px;top:413px;width:1px;height:18px;background:#d9d9d9"></div>
<div class="t" style="left:56px;top:418.2px;font-size:10px;letter-spacing:0.05px">09/01/2024</div>
<div class="t" style="left:164px;top:418.2px;font-size:10px;letter-spacing:-0.2px">PCT00001-290823</div>
<div class="t" style="left:300.5px;top:418.2px;font-size:10px;letter-spacing:-0.3px">Xi măng cần thơ</div>
<div class="t" style="left:499.8px;top:418.2px;font-size:10px;letter-spacing:-0.2px">Chi trả tiền nhà cung cấp</div>
<div class="t" style="left:849.4px;width:300px;text-align:right;top:418.2px;font-size:10px;letter-spacing:-0.1px">33,160,000</div>
<div class="abs" style="left:5px;top:431px;width:33px;height:18px;background-color:#fff;background-image:repeating-linear-gradient(-45deg,#f3f3f3 0 1px,transparent 1px 2.9px)"></div>
<div class="abs" style="left:4px;top:449px;width:34px;height:1px;background:#cccccc"></div>
<div class="t b" style="left:8.8px;top:436.34px;font-size:9.4px;color:#111;">8</div>
<div class="abs" style="left:53px;top:449px;width:1260px;height:1px;background:#d9d9d9"></div>
<div class="abs" style="left:53px;top:431px;width:1px;height:18px;background:#d9d9d9"></div>
<div class="abs" style="left:161px;top:431px;width:1px;height:18px;background:#d9d9d9"></div>
<div class="abs" style="left:297px;top:431px;width:1px;height:18px;background:#d9d9d9"></div>
<div class="abs" style="left:496px;top:431px;width:1px;height:18px;background:#d9d9d9"></div>
<div class="abs" style="left:745px;top:431px;width:1px;height:18px;background:#d9d9d9"></div>
<div class="abs" style="left:884px;top:431px;width:1px;height:18px;background:#d9d9d9"></div>
<div class="abs" style="left:1024px;top:431px;width:1px;height:18px;background:#d9d9d9"></div>
<div class="abs" style="left:1152px;top:431px;width:1px;height:18px;background:#d9d9d9"></div>
<div class="t" style="left:56px;top:436.2px;font-size:10px;letter-spacing:0.05px">09/01/2024</div>
<div class="t" style="left:164px;top:436.2px;font-size:10px;letter-spacing:-0.2px">PCT00002-290823</div>
<div class="t" style="left:300.5px;top:436.2px;font-size:10px;letter-spacing:-0.3px">Xi măng Tây Đô</div>
<div class="t" style="left:499.8px;top:436.2px;font-size:10px;letter-spacing:-0.2px">Chi trả tiền nhà cung cấp</div>
<div class="t" style="left:849.4px;width:300px;text-align:right;top:436.2px;font-size:10px;letter-spacing:-0.1px">269,800,000</div>
<div class="abs" style="left:5px;top:449px;width:33px;height:18px;background-color:#fff;background-image:repeating-linear-gradient(-45deg,#f3f3f3 0 1px,transparent 1px 2.9px)"></div>
<div class="abs" style="left:4px;top:467px;width:34px;height:1px;background:#cccccc"></div>
<div class="t b" style="left:8.8px;top:454.34px;font-size:9.4px;color:#111;">9</div>
<div class="abs" style="left:53px;top:467px;width:1260px;height:1px;background:#d9d9d9"></div>
<div class="abs" style="left:53px;top:449px;width:1px;height:18px;background:#d9d9d9"></div>
<div class="abs" style="left:161px;top:449px;width:1px;height:18px;background:#d9d9d9"></div>
<div class="abs" style="left:297px;top:449px;width:1px;height:18px;background:#d9d9d9"></div>
<div class="abs" style="left:496px;top:449px;width:1px;height:18px;background:#d9d9d9"></div>
<div class="abs" style="left:745px;top:449px;width:1px;height:18px;background:#d9d9d9"></div>
<div class="abs" style="left:884px;top:449px;width:1px;height:18px;background:#d9d9d9"></div>
<div class="abs" style="left:1024px;top:449px;width:1px;height:18px;background:#d9d9d9"></div>
<div class="abs" style="left:1152px;top:449px;width:1px;height:18px;background:#d9d9d9"></div>
<div class="t" style="left:56px;top:454.2px;font-size:10px;letter-spacing:0.05px">09/01/2024</div>
<div class="t" style="left:164px;top:454.2px;font-size:10px;letter-spacing:-0.2px">CTN00001-290823</div>
<div class="t" style="left:499.8px;top:454.2px;font-size:10px;letter-spacing:-0.2px">Chuyển tiền nội bộ đến quỹ khác</div>
<div class="t" style="left:849.4px;width:300px;text-align:right;top:454.2px;font-size:10px;letter-spacing:-0.1px">1,000,000</div>
<div class="abs" style="left:5px;top:467px;width:33px;height:18px;background-color:#fff;background-image:repeating-linear-gradient(-45deg,#f3f3f3 0 1px,transparent 1px 2.9px)"></div>
<div class="abs" style="left:4px;top:485px;width:34px;height:1px;background:#cccccc"></div>
<div class="t b" style="left:8.8px;top:472.34px;font-size:9.4px;color:#111;">10</div>
<div class="abs" style="left:53px;top:485px;width:1260px;height:1px;background:#d9d9d9"></div>
<div class="abs" style="left:53px;top:467px;width:1px;height:18px;background:#d9d9d9"></div>
<div class="abs" style="left:161px;top:467px;width:1px;height:18px;background:#d9d9d9"></div>
<div class="abs" style="left:297px;top:467px;width:1px;height:18px;background:#d9d9d9"></div>
<div class="abs" style="left:496px;top:467px;width:1px;height:18px;background:#d9d9d9"></div>
<div class="abs" style="left:745px;top:467px;width:1px;height:18px;background:#d9d9d9"></div>
<div class="abs" style="left:884px;top:467px;width:1px;height:18px;background:#d9d9d9"></div>
<div class="abs" style="left:1024px;top:467px;width:1px;height:18px;background:#d9d9d9"></div>
<div class="abs" style="left:1152px;top:467px;width:1px;height:18px;background:#d9d9d9"></div>
<div class="t" style="left:56px;top:472.2px;font-size:10px;letter-spacing:0.05px">10/01/2024</div>
<div class="t" style="left:164px;top:472.2px;font-size:10px;letter-spacing:-0.2px">PMH00001-100124</div>
<div class="t" style="left:300.5px;top:472.2px;font-size:10px;letter-spacing:-0.3px">Hoa Sen</div>
<div class="t" style="left:499.8px;top:472.2px;font-size:10px;letter-spacing:-0.2px">Chi tiền mua hàng</div>
<div class="t" style="left:849.4px;width:300px;text-align:right;top:472.2px;font-size:10px;letter-spacing:-0.1px">6,742,000</div>
<div class="abs" style="left:5px;top:485px;width:33px;height:18px;background-color:#fff;background-image:repeating-linear-gradient(-45deg,#f3f3f3 0 1px,transparent 1px 2.9px)"></div>
<div class="abs" style="left:4px;top:503px;width:34px;height:1px;background:#cccccc"></div>
<div class="t b" style="left:8.8px;top:490.34px;font-size:9.4px;color:#111;">11</div>
<div class="abs" style="left:53px;top:503px;width:1260px;height:1px;background:#d9d9d9"></div>
<div class="abs" style="left:53px;top:485px;width:1px;height:18px;background:#d9d9d9"></div>
<div class="abs" style="left:161px;top:485px;width:1px;height:18px;background:#d9d9d9"></div>
<div class="abs" style="left:297px;top:485px;width:1px;height:18px;background:#d9d9d9"></div>
<div class="abs" style="left:496px;top:485px;width:1px;height:18px;background:#d9d9d9"></div>
<div class="abs" style="left:745px;top:485px;width:1px;height:18px;background:#d9d9d9"></div>
<div class="abs" style="left:884px;top:485px;width:1px;height:18px;background:#d9d9d9"></div>
<div class="abs" style="left:1024px;top:485px;width:1px;height:18px;background:#d9d9d9"></div>
<div class="abs" style="left:1152px;top:485px;width:1px;height:18px;background:#d9d9d9"></div>
<div class="t" style="left:56px;top:490.2px;font-size:10px;letter-spacing:0.05px">10/01/2024</div>
<div class="t" style="left:164px;top:490.2px;font-size:10px;letter-spacing:-0.2px">PBH00001-100124</div>
<div class="t" style="left:300.5px;top:490.2px;font-size:10px;letter-spacing:-0.3px">Nguyễn Văn Tam</div>
<div class="t" style="left:499.8px;top:490.2px;font-size:10px;letter-spacing:-0.2px">Bán hàng thu tiền ngay</div>
<div class="t" style="left:721.4px;width:300px;text-align:right;top:490.2px;font-size:10px;letter-spacing:-0.1px">800,000</div>
<div class="abs" style="left:5px;top:503px;width:33px;height:18px;background-color:#fff;background-image:repeating-linear-gradient(-45deg,#f3f3f3 0 1px,transparent 1px 2.9px)"></div>
<div class="abs" style="left:4px;top:521px;width:34px;height:1px;background:#cccccc"></div>
<div class="t b" style="left:8.8px;top:508.34px;font-size:9.4px;color:#111;">12</div>
<div class="abs" style="left:53px;top:521px;width:1260px;height:1px;background:#d9d9d9"></div>
<div class="abs" style="left:53px;top:503px;width:1px;height:18px;background:#d9d9d9"></div>
<div class="abs" style="left:161px;top:503px;width:1px;height:18px;background:#d9d9d9"></div>
<div class="abs" style="left:297px;top:503px;width:1px;height:18px;background:#d9d9d9"></div>
<div class="abs" style="left:496px;top:503px;width:1px;height:18px;background:#d9d9d9"></div>
<div class="abs" style="left:745px;top:503px;width:1px;height:18px;background:#d9d9d9"></div>
<div class="abs" style="left:884px;top:503px;width:1px;height:18px;background:#d9d9d9"></div>
<div class="abs" style="left:1024px;top:503px;width:1px;height:18px;background:#d9d9d9"></div>
<div class="abs" style="left:1152px;top:503px;width:1px;height:18px;background:#d9d9d9"></div>
<div class="t" style="left:56px;top:508.2px;font-size:10px;letter-spacing:0.05px">10/01/2024</div>
<div class="t" style="left:164px;top:508.2px;font-size:10px;letter-spacing:-0.2px">PTT00001-100124</div>
<div class="t" style="left:300.5px;top:508.2px;font-size:10px;letter-spacing:-0.3px">Nguyễn Văn Tam</div>
<div class="t" style="left:499.8px;top:508.2px;font-size:10px;letter-spacing:-0.2px">Thu công nợ khách hàng</div>
<div class="t" style="left:721.4px;width:300px;text-align:right;top:508.2px;font-size:10px;letter-spacing:-0.1px">500,000</div>
<div class="abs" style="left:5px;top:521px;width:33px;height:18px;background-color:#fff;background-image:repeating-linear-gradient(-45deg,#f3f3f3 0 1px,transparent 1px 2.9px)"></div>
<div class="abs" style="left:4px;top:539px;width:34px;height:1px;background:#cccccc"></div>
<div class="t b" style="left:8.8px;top:526.34px;font-size:9.4px;color:#111;">13</div>
<div class="abs" style="left:53px;top:539px;width:1260px;height:1px;background:#d9d9d9"></div>
<div class="abs" style="left:53px;top:521px;width:1px;height:18px;background:#d9d9d9"></div>
<div class="abs" style="left:161px;top:521px;width:1px;height:18px;background:#d9d9d9"></div>
<div class="abs" style="left:297px;top:521px;width:1px;height:18px;background:#d9d9d9"></div>
<div class="abs" style="left:496px;top:521px;width:1px;height:18px;background:#d9d9d9"></div>
<div class="abs" style="left:745px;top:521px;width:1px;height:18px;background:#d9d9d9"></div>
<div class="abs" style="left:884px;top:521px;width:1px;height:18px;background:#d9d9d9"></div>
<div class="abs" style="left:1024px;top:521px;width:1px;height:18px;background:#d9d9d9"></div>
<div class="abs" style="left:1152px;top:521px;width:1px;height:18px;background:#d9d9d9"></div>
<div class="t" style="left:56px;top:526.2px;font-size:10px;letter-spacing:0.05px">10/01/2024</div>
<div class="t" style="left:164px;top:526.2px;font-size:10px;letter-spacing:-0.2px">PBH00002-100124</div>
<div class="t" style="left:300.5px;top:526.2px;font-size:10px;letter-spacing:-0.3px">Võ Minh Trí</div>
<div class="t" style="left:499.8px;top:526.2px;font-size:10px;letter-spacing:-0.2px">Bán hàng thu tiền ngay</div>
<div class="t" style="left:721.4px;width:300px;text-align:right;top:526.2px;font-size:10px;letter-spacing:-0.1px">220,000</div>
<div class="abs" style="left:5px;top:539px;width:33px;height:18px;background-color:#fff;background-image:repeating-linear-gradient(-45deg,#f3f3f3 0 1px,transparent 1px 2.9px)"></div>
<div class="abs" style="left:4px;top:557px;width:34px;height:1px;background:#cccccc"></div>
<div class="t b" style="left:8.8px;top:544.34px;font-size:9.4px;color:#111;">14</div>
<div class="abs" style="left:53px;top:557px;width:1260px;height:1px;background:#d9d9d9"></div>
<div class="abs" style="left:53px;top:539px;width:1px;height:18px;background:#d9d9d9"></div>
<div class="abs" style="left:161px;top:539px;width:1px;height:18px;background:#d9d9d9"></div>
<div class="abs" style="left:297px;top:539px;width:1px;height:18px;background:#d9d9d9"></div>
<div class="abs" style="left:496px;top:539px;width:1px;height:18px;background:#d9d9d9"></div>
<div class="abs" style="left:745px;top:539px;width:1px;height:18px;background:#d9d9d9"></div>
<div class="abs" style="left:884px;top:539px;width:1px;height:18px;background:#d9d9d9"></div>
<div class="abs" style="left:1024px;top:539px;width:1px;height:18px;background:#d9d9d9"></div>
<div class="abs" style="left:1152px;top:539px;width:1px;height:18px;background:#d9d9d9"></div>
<div class="t" style="left:499.8px;top:544.2px;font-size:10px;letter-spacing:-0.2px">Số dư cuối kỳ</div>
<div class="t" style="left:1010.4px;width:300px;text-align:right;top:544.2px;font-size:10px;letter-spacing:-0.1px">-9,845,000</div>
<div class="abs" style="left:53px;top:557px;width:1260px;height:2px;background:#c2c2c2"></div>
<div class="abs" style="left:5px;top:559px;width:33px;height:21px;background-color:#fff;background-image:repeating-linear-gradient(-45deg,#f3f3f3 0 1px,transparent 1px 2.9px)"></div>
<div class="abs" style="left:4px;top:580px;width:34px;height:1px;background:#cccccc"></div>
<div class="t b" style="left:8.8px;top:565.74px;font-size:9.4px;color:#111;">14</div>
<div class="abs" style="left:53px;top:559px;width:1260px;height:21px;background-color:#fff;background-image:repeating-linear-gradient(-45deg,#f3f3f3 0 1px,transparent 1px 2.9px)"></div>
<div class="abs" style="left:53px;top:559px;width:1px;height:21px;background:#d9d9d9"></div>
<div class="abs" style="left:53px;top:580px;width:1260px;height:1px;background:#dedede"></div>
<div class="abs" style="left:746px;top:561px;width:137px;height:17px;background:#fff;border:1px dotted #cfcfcf"></div>
<div class="t b" style="left:580.95px;width:300px;text-align:right;top:565.28px;font-size:9px;color:#e010e0;letter-spacing:0.45px">200,000,000</div>
<div class="abs" style="left:885px;top:561px;width:138px;height:17px;background:#fff;border:1px dotted #cfcfcf"></div>
<div class="t b" style="left:720.95px;width:300px;text-align:right;top:565.28px;font-size:9px;color:#e010e0;letter-spacing:0.45px">100,857,000</div>
<div class="abs" style="left:1025px;top:561px;width:126px;height:17px;background:#fff;border:1px dotted #cfcfcf"></div>
<div class="t b" style="left:848.95px;width:300px;text-align:right;top:565.28px;font-size:9px;color:#e010e0;letter-spacing:0.45px">310,702,000</div>
<div class="abs" style="left:1153px;top:561px;width:159px;height:17px;background:#fff;border:1px dotted #cfcfcf"></div>
<div class="t b" style="left:1009.95px;width:300px;text-align:right;top:565.28px;font-size:9px;color:#e010e0;letter-spacing:0.45px">-9,845,000</div>
<div class="abs" style="left:4px;top:211px;width:1px;height:522px;background:#bdbdbd"></div>
<div class="abs" style="left:38px;top:246px;width:1px;height:334px;background:#cccccc"></div>
<div class="abs" style="left:1313px;top:211px;width:1px;height:522px;background:#bdbdbd"></div>
<div class="abs" style="left:4px;top:708px;width:1310px;height:1px;background:#c6c6c6"></div>
<div class="abs" style="left:5px;top:709px;width:1308px;height:23px;background-color:#fff;background-image:repeating-linear-gradient(-45deg,#f3f3f3 0 1px,transparent 1px 2.9px)"></div>
<div class="abs" style="left:4px;top:732px;width:1310px;height:1px;background:#bdbdbd"></div>
<div class="abs" style="left:746px;top:710px;width:137px;height:21px;background:#fff;border:1px dotted #cfcfcf"></div>
<div class="t b" style="left:580.15px;width:300px;text-align:right;top:716.46px;font-size:9.5px;color:#dd1a1a;letter-spacing:0.65px">2,200,000,000</div>
<div class="abs" style="left:885px;top:710px;width:138px;height:21px;background:#fff;border:1px dotted #cfcfcf"></div>
<div class="t b" style="left:720.15px;width:300px;text-align:right;top:716.46px;font-size:9.5px;color:#dd1a1a;letter-spacing:0.65px">101,857,000</div>
<div class="abs" style="left:1025px;top:710px;width:126px;height:21px;background:#fff;border:1px dotted #cfcfcf"></div>
<div class="t b" style="left:848.1500000000001px;width:300px;text-align:right;top:716.46px;font-size:9.5px;color:#dd1a1a;letter-spacing:0.65px">310,702,000</div>
<div class="abs" style="left:1153px;top:710px;width:159px;height:21px;background:#fff;border:1px dotted #cfcfcf"></div>
<div class="t b" style="left:1009.1500000000001px;width:300px;text-align:right;top:716.46px;font-size:9.5px;color:#dd1a1a;letter-spacing:0.65px">1,991,155,000</div>
<div class="abs" style="left:0;top:736px;width:1318px;height:0;border-top:1px dashed #cfcfcf"></div>
<div class="abs" style="left:0;top:739px;width:1320px;height:0;border-top:1px dashed #d6d6d6"></div>
<div class="abs" style="left:1317px;top:168px;width:0;height:569px;border-left:1px dashed #a8a8a8"></div>
<div class="abs" style="left:0;top:757px;width:1320px;height:1px;background:#e6e6e6"></div>
<div class="t b" style="left:4.5px;top:745.83px;font-size:8px;color:#1a1a1a;">Chào mừng: Administrator đến với phần mềm MekongSoft</div>
<div class="abs" style="left:239px;top:746px;width:1px;height:8px;background:#c8c8c8"></div>
<div class="t b" style="left:249px;top:745.83px;font-size:8px;color:#1a1a1a;">Version: 4.0.0</div>
<div class="abs" style="left:310px;top:746px;width:1px;height:8px;background:#c8c8c8"></div>
<div class="t b" style="left:320px;top:745.49px;font-size:8.4px;color:#e0141e;">Ngày: 11/01/2024 9:30:01 SA</div>
<div class="abs" style="left:1110px;top:741px;width:0;height:16px;border-left:1px dotted #c8c8c8"></div>
<div class="t b" style="left:1117.5px;top:745.7px;font-size:8.15px;color:#1a1a1a;">@2023 MekongSoft. Thông tin hỗ trợ: 0901 000 508</div>
</body></html>
